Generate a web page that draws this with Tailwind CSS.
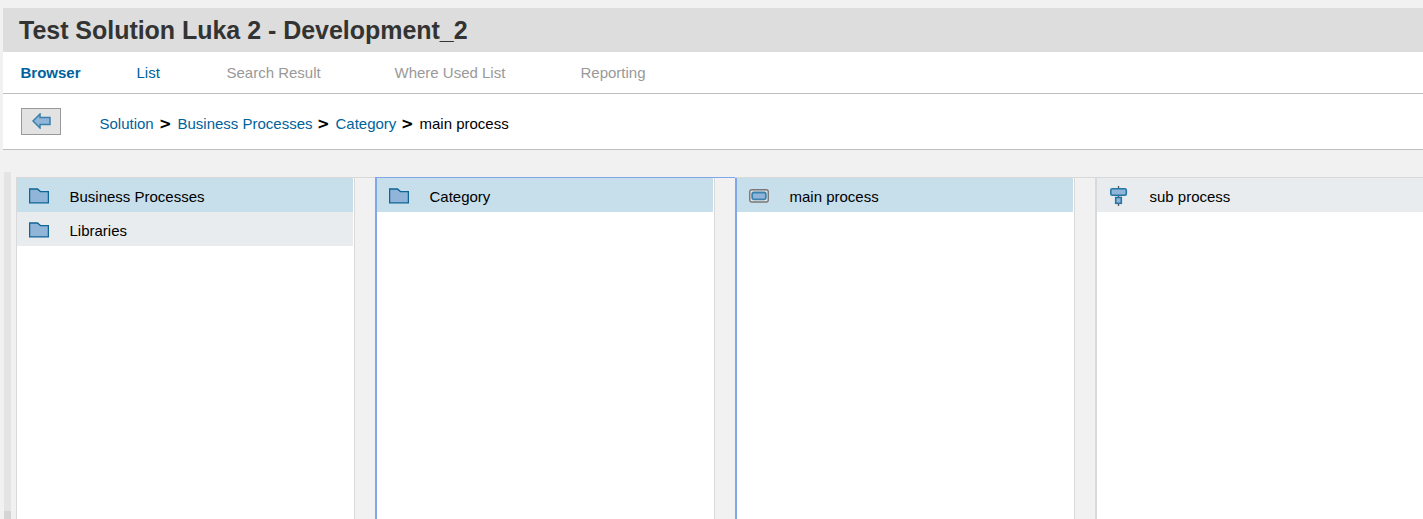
<!DOCTYPE html>
<html lang="en">
<head>
<meta charset="utf-8">
<title>Test Solution Luka 2 - Development_2</title>
<script src="https://cdn.jsdelivr.net/npm/@tailwindcss/browser@4"></script>
</head>
<body class="h-[519px] overflow-hidden bg-[#f1f1f1] pt-2 font-['Liberation_Sans',Arial,sans-serif] text-[15px] leading-[18px] text-black">
<svg class="hidden">
  <symbol id="folder" viewBox="0 0 20 16">
    <path d="M.6 1H8.5L11.5 3.6H19.4V14.9H.6Z" fill="#91b5d8" stroke="#0f6596" stroke-width="1.3"/>
  </symbol>
</svg>
<header class="ml-[3px] flex h-11 items-center bg-[#ddd] pl-4">
  <h1 class="text-[25px] leading-[30px] font-bold tracking-[-0.03px] whitespace-nowrap text-[#333]">Test Solution Luka 2 - Development_2</h1>
</header>
<nav class="ml-[3px] flex h-[42px] items-center border-b border-[#bfbfbf] bg-white pl-[17.5px] whitespace-nowrap text-[#999]">
  <a class="w-[116px] font-bold text-[#00629b]">Browser</a>
  <a class="w-[90px] text-[#00629b]">List</a>
  <a class="w-[168px]">Search Result</a>
  <a class="w-[186px]">Where Used List</a>
  <a>Reporting</a>
</nav>
<section class="ml-[3px] flex h-14 border-b border-[#bfbfbf] bg-white pl-[18px] whitespace-nowrap">
  <button class="mt-[14px] flex h-[27px] w-10 items-start justify-center border border-[#999] bg-[#e2e2e2] pt-1" aria-label="Back">
    <svg class="h-4 w-[19px]" viewBox="0 0 19 16"><path d="M1 8L8 1V4.5H18V11.5H8V15Z" fill="#91b5d8" stroke="#3a80aa" stroke-width="1.5"/></svg>
  </button>
  <div class="mt-[21px] ml-[38.5px] flex text-[#00629b]">
    <a class="w-[59.5px]">Solution</a>
    <span class="w-[18.5px] font-['DejaVu_Sans',sans-serif] text-[15px] font-bold text-black">&gt;</span>
    <a class="w-[139.5px]">Business Processes</a>
    <span class="w-[18.5px] font-['DejaVu_Sans',sans-serif] text-[15px] font-bold text-black">&gt;</span>
    <a class="w-[65.5px]">Category</a>
    <span class="w-[18.5px] font-['DejaVu_Sans',sans-serif] text-[15px] font-bold text-black">&gt;</span>
    <span class="text-black">main process</span>
  </div>
</section>
<main class="flex h-[369px] pl-1 whitespace-nowrap">
  <div class="mt-[22px] flex w-[7px] shrink-0 flex-col justify-end bg-[#e4e4e4]"><div class="h-2 bg-[#d4d4d4]"></div></div>
  <div class="mt-[27px] ml-[5px] flex shrink-0">
    <section class="w-[359px] shrink-0 border-t border-[#d9d9d9]">
      <div class="h-full w-[339px] border-x border-[#d9d9d9] bg-white pr-px">
        <div class="flex h-[34px] items-center bg-[#c7deeb] pl-3"><svg class="mt-0.5 mr-[20.5px] h-4 w-5"><use href="#folder"/></svg><span class="mt-1">Business Processes</span></div>
        <div class="flex h-[34px] items-center bg-[#e8ecef] pl-3"><svg class="mt-0.5 mr-[20.5px] h-4 w-5"><use href="#folder"/></svg><span class="mt-1">Libraries</span></div>
      </div>
    </section>
    <section class="w-[360px] shrink-0 border-t border-[#80a8e8]">
      <div class="h-full w-[340px] border-r border-l-2 border-r-[#d9d9d9] border-l-[#80a8e8] bg-white pr-px">
        <div class="flex h-[34px] items-center bg-[#c7deeb] pl-3"><svg class="mt-0.5 mr-[20.5px] h-4 w-5"><use href="#folder"/></svg><span class="mt-1">Category</span></div>
      </div>
    </section>
    <section class="w-[360px] shrink-0 border-t border-[#d9d9d9]">
      <div class="h-full w-[340px] border-r border-l-2 border-r-[#d9d9d9] border-l-[#80a8e8] bg-white pr-px">
        <div class="flex h-[34px] items-center bg-[#c7deeb] pl-3">
          <svg class="mt-0.5 mr-[20.5px] h-[14px] w-5" viewBox="0 0 20 14"><rect x=".75" y=".75" width="18.5" height="12.3" rx="2" fill="#e5e5e5" stroke="#777" stroke-width="1.4"/><rect x="3.2" y="3.5" width="13.6" height="6.8" rx="1.5" fill="#91b5d8" stroke="#3a83b0" stroke-width="1.8"/></svg><span class="mt-1">main process</span></div>
      </div>
    </section>
    <section class="w-[328px] shrink-0 border-t border-[#d9d9d9]">
      <div class="h-full border-l-2 border-[#d9d9d9] bg-white">
        <div class="flex h-[34px] items-center bg-[#e8ecef] pl-3">
          <svg class="mt-0.5 mr-[20.5px] h-5 w-5" viewBox="0 0 20 20"><path d="M9.5 0V20" stroke="#555" stroke-width="1.3"/><rect x="1.8" y="2.8" width="15.5" height="6.4" rx="1.5" fill="#91b5d8" stroke="#2576a4" stroke-width="1.6"/><rect x="6.7" y="11.5" width="5.6" height="5.8" fill="#91b5d8" stroke="#2576a4" stroke-width="1.6"/></svg><span class="mt-1">sub process</span></div>
      </div>
    </section>
  </div>
</main>
</body>
</html>
